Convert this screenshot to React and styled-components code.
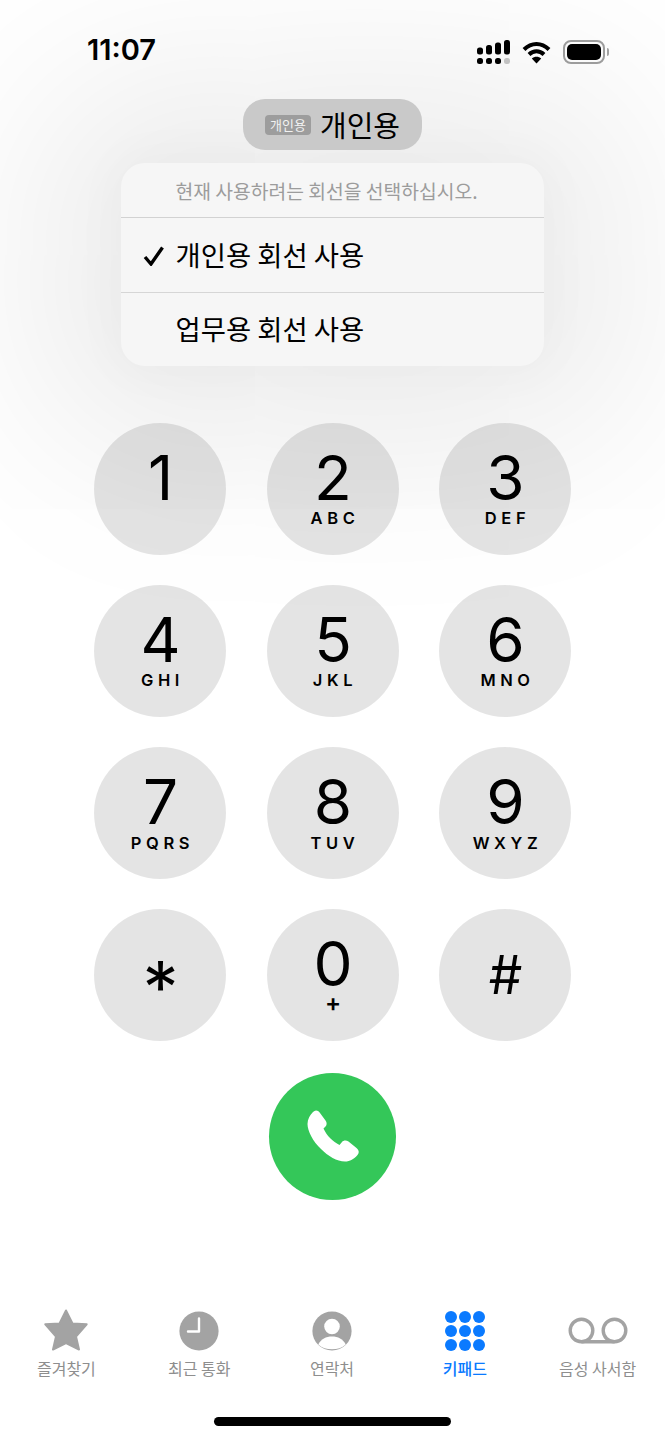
import styled, { createGlobalStyle } from "styled-components";

const KR = `"Noto Sans CJK KR", "Noto Sans", sans-serif`;

const GlobalStyle = createGlobalStyle`
  html, body {
    margin: 0;
    padding: 0;
    background: #fff;
  }
  * { box-sizing: border-box; }
`;

const keys = [
  { digit: "1" }, { digit: "2", letters: "ABC" }, { digit: "3", letters: "DEF" },
  { digit: "4", letters: "GHI" }, { digit: "5", letters: "JKL" }, { digit: "6", letters: "MNO" },
  { digit: "7", letters: "PQRS" }, { digit: "8", letters: "TUV" }, { digit: "9", letters: "WXYZ" },
  { digit: "*", size: 72, top: 47 }, { digit: "0", plus: true }, { digit: "#", size: 53, top: 35 },
];

const StarIcon = () => (
  <svg width="44" height="43" viewBox="0 0 44 43">
    <path
      fill="#a3a3a3"
      stroke="#a3a3a3"
      strokeWidth="2"
      strokeLinejoin="round"
      d="M22 1.500L28.500 14.500L42.700 15.300L32 27.500L35 40.500L22 34L9 40.500L12 27.500L1.300 15.300L15.500 14.500Z"
    />
  </svg>
);

const ClockIcon = () => (
  <svg width="40" height="40" viewBox="0 0 40 40">
    <circle cx="20" cy="20" r="19.600" fill="#a3a3a3" />
    <path d="M20 7.500V20.500H9" fill="none" stroke="#fff" strokeWidth="2.400" strokeLinecap="round" strokeLinejoin="round" />
  </svg>
);

const ContactIcon = () => (
  <svg width="40" height="40" viewBox="0 0 40 40">
    <circle cx="20" cy="20" r="19.600" fill="#a3a3a3" />
    <circle cx="20" cy="15.500" r="7.800" fill="#fff" />
    <path d="M6.300 33.500C9 28 14 25.500 20 25.500S31 28 33.700 33.500C30 37 25.500 38.300 20 38.300S10 37 6.300 33.500Z" fill="#fff" />
  </svg>
);

const KeypadIcon = () => (
  <svg width="40" height="40" viewBox="0 0 40 40" fill="#0a7aff">
    {[6, 20, 34].map((cy) =>
      [6, 20, 34].map((cx) => <circle key={`${cx}-${cy}`} cx={cx} cy={cy} r="6" />)
    )}
  </svg>
);

const VoicemailIcon = () => (
  <svg width="60" height="27" viewBox="0 0 60 27" fill="none" stroke="#a3a3a3" strokeWidth="3.400">
    <circle cx="13.500" cy="13.500" r="11.300" />
    <circle cx="46.500" cy="13.500" r="11.300" />
    <path d="M13.500 24.800H46.500" />
  </svg>
);

const PhoneIcon = () => (
  <svg width="52" height="52" viewBox="0 0 52 52">
    <path
      fill="#fff"
      d="M9 .5C11 .5 12 1.500 13 3L18.500 10.500C20 12.500 20 15 18.500 16.500L16.500 18.500C18 22 20.500 25.500 23.500 28.500C26 31 29 33 32.500 35L35 32C36.500 30 39.500 30 41.500 31.500L49.500 38C52 40 52.500 43 50.500 45C47 49 43 51.500 38 51.500C30 51.500 21 46 14 39C6 31.500 .5 21 .5 14C.5 9 3 5 6 2C7 1 8 .5 9 .5Z"
    />
  </svg>
);

const tabs = [
  { label: "즐겨찾기", icon: <StarIcon /> },
  { label: "최근 통화", icon: <ClockIcon /> },
  { label: "연락처", icon: <ContactIcon /> },
  { label: "키패드", icon: <KeypadIcon />, active: true },
  { label: "음성 사서함", icon: <VoicemailIcon /> },
];

export default function App() {
  return (
    <>
      <GlobalStyle />
      <Screen>
        <StatusBar>
          <Clock>11:07</Clock>
          <StatusIcons>
            <svg width="33" height="24" viewBox="0 0 33 24" fill="#000">
              <rect x="0" y="7.500" width="6" height="7" rx="2.500" />
              <rect x="9" y="5" width="6" height="9.500" rx="2.500" />
              <rect x="18" y="2.500" width="6" height="12" rx="2.500" />
              <rect x="27" y="0" width="6" height="14.500" rx="2.500" />
              <rect x="0" y="18" width="6" height="6" rx="2.500" />
              <rect x="9" y="18" width="6" height="6" rx="2.500" />
              <rect x="18" y="18" width="6" height="6" rx="2.500" />
              <rect x="27" y="18" width="6" height="6" rx="2.500" fill="#c8c8c8" />
            </svg>
            <svg width="29" height="23" viewBox="0 0 29 23" fill="none" stroke="#000" strokeWidth="4">
              <path d="M2 8.500C9.500 1.200 19.500 1.200 27 8.500" />
              <path d="M7 13.500C11.500 9.200 17.500 9.200 22 13.500" />
              <path d="M14.500 22.500L9.800 17.600C12.500 15.200 16.500 15.200 19.200 17.600Z" fill="#000" stroke="none" />
            </svg>
            <Battery>
              <BatteryFill />
            </Battery>
          </StatusIcons>
        </StatusBar>

        <LinePill>
          <LineBadge>개인용</LineBadge>
          개인용
        </LinePill>

        <LineMenu>
          <MenuTitle>현재 사용하려는 회선을 선택하십시오.</MenuTitle>
          <MenuItem>
            <svg width="22" height="20" viewBox="0 0 22 20" fill="none" stroke="#000" strokeWidth="3.400">
              <path d="M2 11L8 18L19.500 1.500" />
            </svg>
            개인용 회선 사용
          </MenuItem>
          <MenuItem>업무용 회선 사용</MenuItem>
        </LineMenu>

        <Keypad>
          {keys.map(({ digit, letters, plus, size, top }) => (
            <Key key={digit}>
              <Digit $size={size} $top={top}>{digit}</Digit>
              {letters && <Letters>{letters}</Letters>}
              {plus && <PlusSign>+</PlusSign>}
            </Key>
          ))}
        </Keypad>

        <CallButton>
          <PhoneIcon />
        </CallButton>

        <TabBar>
          {tabs.map((tab) => (
            <Tab key={tab.label} $active={tab.active}>
              <TabIcon>{tab.icon}</TabIcon>
              {tab.label}
            </Tab>
          ))}
        </TabBar>

        <HomeIndicator />
      </Screen>
    </>
  );
}

const Screen = styled.div`
  width: 665px;
  height: 1440px;
  overflow: hidden;
  background: #fff;
  display: flex;
  flex-direction: column;
  align-items: center;
  font-family: ${KR};
  color: #000;
`;

const StatusBar = styled.div`
  width: 100%;
  height: 99px;
  padding: 32px 60px 0 87px;
  display: flex;
  justify-content: space-between;
  align-items: flex-start;
`;

const Clock = styled.div`
  font-family: Inter, sans-serif;
  font-size: 29px;
  font-weight: 600;
  line-height: 35px;
`;

const StatusIcons = styled.div`
  display: flex;
  align-items: center;
  gap: 12px;
  margin-top: 8px;
`;

const Battery = styled.div`
  position: relative;
  width: 42px;
  height: 24px;
  border: 2px solid #a0a0a0;
  border-radius: 8px;
  padding: 2px;

  &::after {
    content: "";
    position: absolute;
    right: -6px;
    top: 6px;
    width: 2.5px;
    height: 8px;
    border-radius: 0 2px 2px 0;
    background: #a5a5a5;
  }
`;

const BatteryFill = styled.div`
  width: 100%;
  height: 100%;
  background: #000;
  border-radius: 5px;
`;

const LinePill = styled.div`
  width: 179px;
  height: 51px;
  flex: none;
  border-radius: 22px;
  background: #c9c9c9;
  display: flex;
  align-items: center;
  justify-content: center;
  gap: 9px;
  font-size: 29px;
  line-height: 1;
  position: relative;
  z-index: 2;
`;

const LineBadge = styled.span`
  background: #9d9d9d;
  color: #f2f2f2;
  font-size: 13px;
  line-height: 20px;
  width: 46px;
  text-align: center;
  border-radius: 4px;
`;

const LineMenu = styled.div`
  width: 423px;
  flex: none;
  margin-top: 13px;
  border-radius: 24px;
  background: #f6f6f6;
  box-shadow: 0 0 200px 80px rgba(0, 0, 0, 0.085), 0 0 50px 10px rgba(0, 0, 0, 0.025);
  position: relative;
  z-index: 1;
`;

const MenuTitle = styled.div`
  height: 55px;
  padding: 2px 0 0 54.5px;
  display: flex;
  align-items: center;
  font-size: 19.3px;
  color: #9c9c9c;
  border-bottom: 1px solid #d2d2d2;
`;

const MenuItem = styled.div`
  height: 74px;
  padding: 0 0 3px 54.5px;
  position: relative;
  display: flex;
  align-items: center;
  font-size: 27.4px;

  & + & {
    border-top: 1px solid #d6d6d6;
  }

  svg {
    position: absolute;
    left: 21.5px;
    top: 27.5px;
  }
`;

const Keypad = styled.div`
  margin-top: 56.7px;
  display: grid;
  grid-template-columns: repeat(3, 132px);
  column-gap: 40.5px;
  row-gap: 30.2px;
  position: relative;
  z-index: 2;
`;

const Key = styled.div`
  width: 132px;
  height: 132px;
  border-radius: 50%;
  background: rgba(0, 0, 0, 0.105);
  position: relative;
  display: flex;
  justify-content: center;
  font-family: Inter, sans-serif;
`;

const Digit = styled.div`
  font-size: ${(p) => p.$size || 62}px;
  font-weight: 380;
  line-height: 62px;
  padding-left: 1px;
  margin-top: ${(p) => p.$top || 24}px;
`;

const Letters = styled.div`
  position: absolute;
  left: 0;
  right: 0;
  top: 85.5px;
  text-align: center;
  font-size: 16.5px;
  font-weight: 600;
  line-height: 20px;
  letter-spacing: 4.6px;
  padding-left: 5px;
`;

const PlusSign = styled.div`
  position: absolute;
  left: 1px;
  right: 0;
  top: 82px;
  text-align: center;
  font-size: 24px;
  font-weight: 600;
  line-height: 24px;
`;

const CallButton = styled.div`
  width: 127px;
  height: 127px;
  flex: none;
  margin-top: 31.4px;
  border-radius: 50%;
  background: #34c759;
  display: flex;
  align-items: center;
  justify-content: center;
`;

const TabBar = styled.div`
  width: 100%;
  margin-top: 109px;
  padding-right: 1px;
  display: grid;
  grid-template-columns: repeat(5, 1fr);
`;

const Tab = styled.div`
  display: flex;
  flex-direction: column;
  align-items: center;
  font-size: 16px;
  line-height: 22px;
  font-weight: ${(p) => (p.$active ? 500 : 400)};
  color: ${(p) => (p.$active ? "#0a7aff" : "#8e8e8e")};
`;

const TabIcon = styled.div`
  height: 44px;
  margin-bottom: 4px;
  display: flex;
  align-items: center;
  justify-content: center;
`;

const HomeIndicator = styled.div`
  width: 237px;
  height: 9.500px;
  flex: none;
  margin-top: 38px;
  border-radius: 5px;
  background: #000;
`;
